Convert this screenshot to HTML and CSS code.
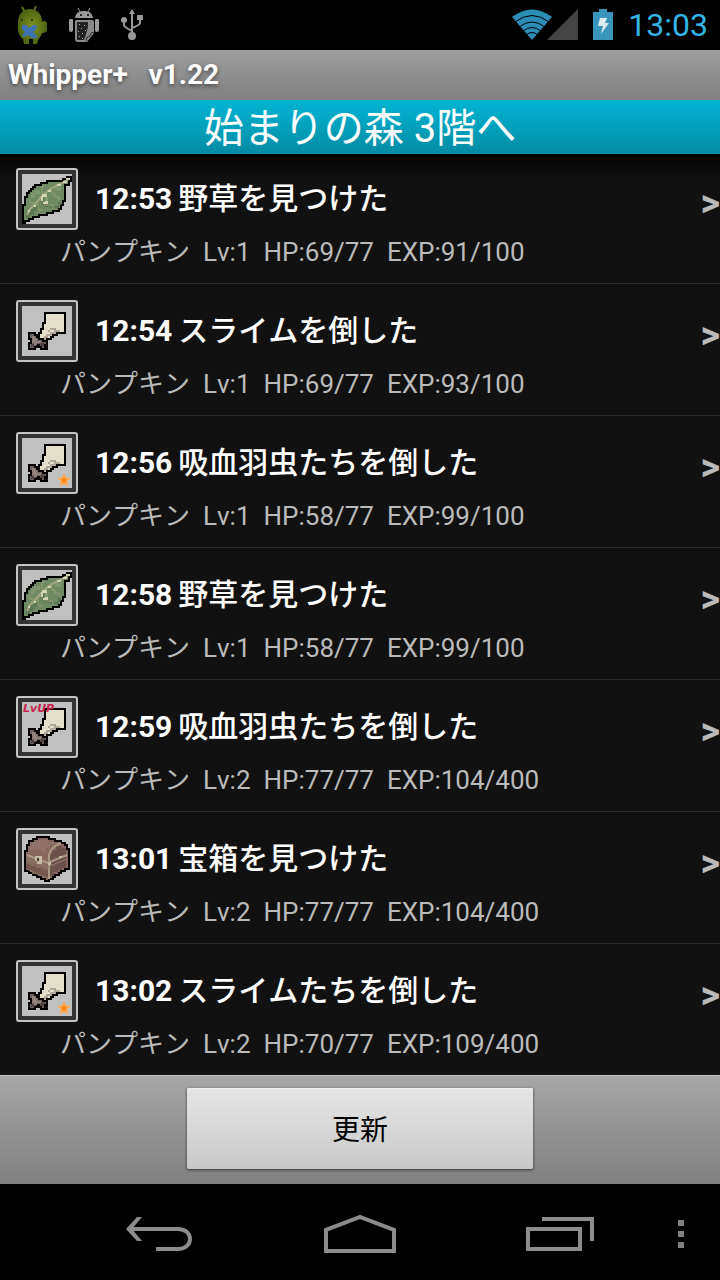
FILE: index.html
```html
<!DOCTYPE html>
<html lang="ja">
<head>
    <meta charset="UTF-8">
    <meta name="viewport" content="width=device-width">
    <title>Whipper+</title>
    <link rel="stylesheet" href="styles.css">
</head>
<body>
<!-- アイコン定義 -->
<svg class="defs" aria-hidden="true">
    <symbol id="leaf" viewBox="0 0 50 50">
        <path fill="#6f8a62" stroke="#000" stroke-width="2" d="M49 3H45V5H41V7H25V9H19V11H13V13H11V15H9V17H7V19H5V23H3V31H1V49H3V47H7V45H11V43H17V41H25V39H31V37H37V35H39V31H41V27H43V11H47V7H49Z"/>
        <path fill="#5d7754" d="M4 38h4v-3h4v-3h5v5h-5v4H8v3H4zM28 32h8v-4h3v3h-2v3h-9zM20 24h2v6h6v3h-6v-2h-2z"/>
        <path fill="none" stroke="#a6a980" stroke-width="2" d="M5 41L8 35L14 29L20 22L28 15L36 11L46 6"/>
        <path fill="none" stroke="#9aa077" stroke-width="1" d="M20 20V12H23M13 29H8V25M30 14V20H33V23H37V26M22 31H31V35M16 29V36H21"/>
        <path fill="#d2d4b5" d="M20 20h5v3h-4v4h-2v-5h1zM23 27h3v3h-5v-2h2zM35 10h4v2h-4zM41 7h4v2h-4zM44 4h4v2h-4zM26 16h3v2h-3zM12 31h2v2h-2zM6 36h2v2h-2z"/>
        <path fill="#7f9871" d="M12 16h6v4h-5v4H9v-5h3zM33 13h6v4h-6zM23 23h3v4h-3z"/>
    </symbol>
    <symbol id="sword" viewBox="0 0 50 50">
        <path fill="#e4dfca" stroke="#000" stroke-width="2" d="M23 7H43V27H35V29H31V31H29V33H25V35H21V37H15V29H17V27H19V23H21V17H23Z"/>
        <path fill="#b0a69a" d="M22 28H24V26H26V24H28V22H34V24H38V26H34V28H30V30H26V32H24V34H20V30H22Z"/>
        <path fill="#e4dfca" d="M28 24h4v2h-4v2h-4v2h-2v2h-4v-2h4v-2h2v-2h4z"/>
        <path fill="#6e5f5c" stroke="#000" stroke-width="2" d="M7 27H13V29H15V31H17V33H21V35H25V39H23V41H25V43H19V41H17V39H15V41H13V43H7V37H9V33H7Z"/>
        <path fill="#91817c" d="M10 30h3v2h2v3h4v2h-4v2h-3v-2h-2z"/>
        <path fill="#4c4343" d="M9 38h3v3H9zM18 37h4v3h-3z"/>
    </symbol>
    <symbol id="star" viewBox="0 0 12 12">
        <path fill="#ff8a1c" stroke="#ffac55" stroke-width="1" d="M6 1L7.300 4.500H11L8.200 6.900L9.200 10.700L6 8.500L2.800 10.700L3.800 6.900L1 4.500H4.700Z"/>
    </symbol>
    <symbol id="chest" viewBox="0 0 50 50">
        <path fill="#876860" stroke="#000" stroke-width="2" d="M15 3H27V5H33V7H39V9H43V11H45V15H47V35H43V37H39V39H37V41H33V43H31V45H27V47H23V45H19V43H15V41H11V39H7V37H3V17H5V11H7V7H11V5H15Z"/>
        <path fill="#6b514c" d="M28 26V20H30V16H34V12H40V14H44V34H40V36H36V38H32V42H28Z"/>
        <path fill="#74584f" d="M4 30H8V32H14V34H20V36H26V44H22V42H16V40H10V36H4Z"/>
        <path fill="#917269" d="M10 8h5v-2h11v2h6v2h-4v3h-4v5h-4v-2H8v-4h2z"/>
        <path fill="none" stroke="#a89a84" stroke-width="2" d="M5 21L15 25L26 29L35 25L45 21M27 29V45M27 27V21L29 16L33 12L39 9"/>
        <path fill="none" stroke="#917f6f" stroke-width="1" d="M5 25L15 29L26 33L35 29L45 25M5 35L15 40L25 44"/>
        <path fill="#c4baa3" d="M13 22h7v8h-5v-3h-2zM26 28h3v3h-3zM37 22h3v2h-3z"/>
        <path fill="#4a3a38" d="M15 24h2v3h-2z"/>
    </symbol>
</svg>

<div class="status">
    <div class="status-left">
        <svg width="32" height="40" viewBox="0 0 32 40" aria-hidden="true">
            <defs>
                <radialGradient id="droid"><stop offset="0" stop-color="#7f9420"/><stop offset="1" stop-color="#4e6410"/></radialGradient>
            </defs>
            <path d="M6 2L9 7M20 1L18 6" stroke="#5e6d1c" stroke-width="2"/>
            <path fill="url(#droid)" d="M2 18C2 9 7 4 14 4C22 4 26 10 26 17L28 16Q31 16 31 19V25Q31 28 26 28C25 32 23 33 22 35L21 39H17V34H13V39H8L7 34C3 31 1 26 2 18Z"/>
            <circle cx="6" cy="15" r="1" fill="#222"/><circle cx="16" cy="15" r="1" fill="#222"/>
            <path fill="#3f74b4" d="M6 20L10 20L13 23L17 20L21 20L20 25L17 27L21 31V33L16 33L12 30L8 32L6 31L9 27L6 24Z"/>
        </svg>
        <svg width="32" height="36" viewBox="0 0 32 36" aria-hidden="true">
            <path fill="#999" d="M7 11C8 5 12 4 16 4S24 5 25 11ZM2 12h2q1 0 1 1v10q0 2-2 2t-2-2V14q0-2 1-2zM28 12h2q1 0 1 2v9q0 2-2 2t-2-2V14q0-2 1-2z"/>
            <path stroke="#999" stroke-width="1" d="M10 1l2 4M22 1l-2 4"/>
            <circle cx="13" cy="8" r="1"/><circle cx="20" cy="8" r="1"/>
            <path fill="#888" d="M8 13H24Q26 13 26 15V26L19 35H10Q7 35 7 32V14Z"/>
            <path fill="#222" d="M9 15H20V20L18 27L16 33H9Z"/>
            <path fill="#aaa" d="M11 17h1v1h-1zM16 18h1v1h-1zM13 21h1v1h-1zM17 23h1v1h-1zM10 24h1v1h-1zM14 26h1v1h-1zM11 29h1v1h-1zM14 31h1v1h-1z"/>
            <path d="M26 25l-3 1-1 3-3 1-1 4" fill="none" stroke="#333"/>
        </svg>
        <svg width="24" height="34" viewBox="0 0 24 34" aria-hidden="true">
            <path fill="none" stroke="#999" stroke-width="2" d="M12 4V28M4 12V17Q4 19 12 23M20 9V15Q20 17 12 20"/>
            <path fill="#999" d="M12 1L15 6H9ZM17 7h6v5h-6z"/>
            <circle cx="4" cy="12" r="3" fill="#999"/><circle cx="12" cy="28" r="4" fill="#999"/>
        </svg>
    </div>
    <div class="status-right">
        <svg width="66" height="32" viewBox="0 0 66 32" aria-hidden="true">
            <path fill="#2b8db5" d="M0 8Q20 -7 40 8L20 31Z"/>
            <path fill="none" stroke="#000" stroke-width="1" d="M3 13Q20 0 37 13M7 18Q20 8 33 18M11 22Q20 15 29 22M14 26Q20 21 26 26"/>
            <path fill="#444" d="M35 31L66 0V31Z"/>
        </svg>
        <svg width="20" height="32" viewBox="0 0 20 32" aria-hidden="true">
            <path fill="#3996ba" d="M6 0H14V3H20V31H0V3H6Z"/>
            <path fill="#dcebf2" d="M7 9H14L12 14H16L8 25L10 17H5Z"/>
        </svg>
        <span class="clock">13:03</span>
    </div>
</div>

<header class="title">Whipper+ &nbsp; v1.22</header>
<h1 class="place">始まりの森 3階へ</h1>

<main class="log">
    <a class="row" href="#">
        <span class="head">
            <span class="icon"><svg><use href="#leaf"/></svg></span>
            <span class="event"><b>12:53</b><span>野草を見つけた</span></span>
            <span class="more">&gt;</span>
        </span>
        <span class="info"><span>パンプキン</span><span>Lv:1</span><span>HP:69/77</span><span>EXP:91/100</span></span>
    </a>
    <a class="row" href="#">
        <span class="head">
            <span class="icon"><svg><use href="#sword"/></svg></span>
            <span class="event"><b>12:54</b><span>スライムを倒した</span></span>
            <span class="more">&gt;</span>
        </span>
        <span class="info"><span>パンプキン</span><span>Lv:1</span><span>HP:69/77</span><span>EXP:93/100</span></span>
    </a>
    <a class="row" href="#">
        <span class="head">
            <span class="icon"><svg><use href="#sword"/></svg><svg class="badge"><use href="#star"/></svg></span>
            <span class="event"><b>12:56</b><span>吸血羽虫たちを倒した</span></span>
            <span class="more">&gt;</span>
        </span>
        <span class="info"><span>パンプキン</span><span>Lv:1</span><span>HP:58/77</span><span>EXP:99/100</span></span>
    </a>
    <a class="row" href="#">
        <span class="head">
            <span class="icon"><svg><use href="#leaf"/></svg></span>
            <span class="event"><b>12:58</b><span>野草を見つけた</span></span>
            <span class="more">&gt;</span>
        </span>
        <span class="info"><span>パンプキン</span><span>Lv:1</span><span>HP:58/77</span><span>EXP:99/100</span></span>
    </a>
    <a class="row" href="#">
        <span class="head">
            <span class="icon"><svg><use href="#sword"/></svg><span class="lvup">LvUP</span></span>
            <span class="event"><b>12:59</b><span>吸血羽虫たちを倒した</span></span>
            <span class="more">&gt;</span>
        </span>
        <span class="info"><span>パンプキン</span><span>Lv:2</span><span>HP:77/77</span><span>EXP:104/400</span></span>
    </a>
    <a class="row" href="#">
        <span class="head">
            <span class="icon"><svg><use href="#chest"/></svg></span>
            <span class="event"><b>13:01</b><span>宝箱を見つけた</span></span>
            <span class="more">&gt;</span>
        </span>
        <span class="info"><span>パンプキン</span><span>Lv:2</span><span>HP:77/77</span><span>EXP:104/400</span></span>
    </a>
    <a class="row" href="#">
        <span class="head">
            <span class="icon"><svg><use href="#sword"/></svg><svg class="badge"><use href="#star"/></svg></span>
            <span class="event"><b>13:02</b><span>スライムたちを倒した</span></span>
            <span class="more">&gt;</span>
        </span>
        <span class="info"><span>パンプキン</span><span>Lv:2</span><span>HP:70/77</span><span>EXP:109/400</span></span>
    </a>
</main>

<footer class="bottom">
    <button class="update" type="button">更新</button>
</footer>

<nav class="nav">
    <button type="button" aria-label="戻る">
        <svg width="68" height="36" viewBox="0 0 68 36">
            <path fill="none" stroke="#8c8c8c" stroke-width="4" d="M5 13H52C68 13 68 33 52 33H30"/>
            <path fill="#8c8c8c" d="M0 13L11 1H16L6 13L16 25H11Z"/>
        </svg>
    </button>
    <button type="button" aria-label="ホーム">
        <svg width="72" height="38" viewBox="0 0 72 38">
            <path fill="none" stroke="#8c8c8c" stroke-width="4" d="M2 36V15L36 2L70 15V36Z"/>
        </svg>
    </button>
    <button type="button" aria-label="履歴">
        <svg width="68" height="34" viewBox="0 0 68 34">
            <path fill="none" stroke="#8c8c8c" stroke-width="4" d="M2 12H54V32H2ZM16 2H66V24"/>
        </svg>
    </button>
    <button class="menu" type="button" aria-label="メニュー">
        <svg width="8" height="28" viewBox="0 0 8 28">
            <path fill="#808080" d="M1 0h6v6H1zM1 11h6v6H1zM1 22h6v6H1z"/>
        </svg>
    </button>
</nav>
</body>
</html>
```
FILE: styles.css
```css
*{box-sizing:border-box;}
body{display:flex;flex-direction:column;min-height:100vh;margin:0;background:#000;color:#fff;font-family:Roboto,"Noto Sans CJK JP",sans-serif;font-kerning:none;}
svg{display:block;flex:none;}
button{margin:0;padding:0;border:0;background:none;font-family:inherit;}
.defs{position:absolute;width:0;height:0;}

/* ステータスバー */
.status{display:flex;justify-content:space-between;height:50px;padding:0 12px 0 16px;}
.status-left,.status-right{display:flex;align-items:center;}
.status-left{gap:20px;}
.status-right{gap:15px;}
.clock{color:#33b5e5;font-size:32px;line-height:50px;}

.title{height:50px;padding:0 8px;background:linear-gradient(#9e9e9e,#808080);font-size:28px;font-weight:bold;line-height:50px;text-shadow:0 2px 4px #444;}
.place{height:54px;margin:0;padding-top:2px;background:linear-gradient(#02b5d4,#048ba2);font-size:40px;font-weight:normal;line-height:54px;text-align:center;}

/* ログ一覧 */
.log{flex:1;background:linear-gradient(#000,#111 24px);}
.row{display:block;padding:16px 0 9px 16px;border-bottom:1px solid #2a2a2a;color:#fff;text-decoration:none;}
.row:first-child{padding-top:14px;}
.row:last-child{border-bottom:0;}
.head{display:flex;align-items:center;gap:17px;height:62px;}
.icon{position:relative;flex:none;width:62px;height:62px;padding:4px;border:2px solid #c4c4c4;border-radius:3px;background:#333;}
.icon svg{width:50px;height:50px;background:#c0c0c0;}
.icon .badge{position:absolute;right:5px;bottom:5px;width:14px;height:14px;background:none;}
.lvup{position:absolute;top:4px;left:5px;color:#c8234f;font:italic bold 11px/14px "DejaVu Sans",sans-serif;}
.event{display:flex;flex:1;gap:6px;font-size:30px;font-weight:500;line-height:62px;white-space:nowrap;}
.more{padding-top:8px;color:#bbb;font-size:38px;font-weight:bold;}
.info{display:flex;gap:13px;padding-left:44px;color:#bbb;font-size:26px;line-height:44px;white-space:nowrap;}

.bottom{display:flex;justify-content:center;padding:12px 0 15px;border-top:1px solid #c4c4c4;background:linear-gradient(#a6a6a6,#808080);}
.update{width:48%;height:81px;padding-bottom:2px;border-radius:2px;background:linear-gradient(#e6e6e6,#c8c8c8);box-shadow:0 1px 3px #333,inset 0 1px 0 #eee;color:#000;font-size:28px;}

.nav{display:flex;height:96px;padding-left:60px;}
.nav button{display:flex;flex:1;align-items:center;justify-content:center;padding-top:3px;}
.nav .menu{flex:none;width:60px;padding-right:18px;}
```
